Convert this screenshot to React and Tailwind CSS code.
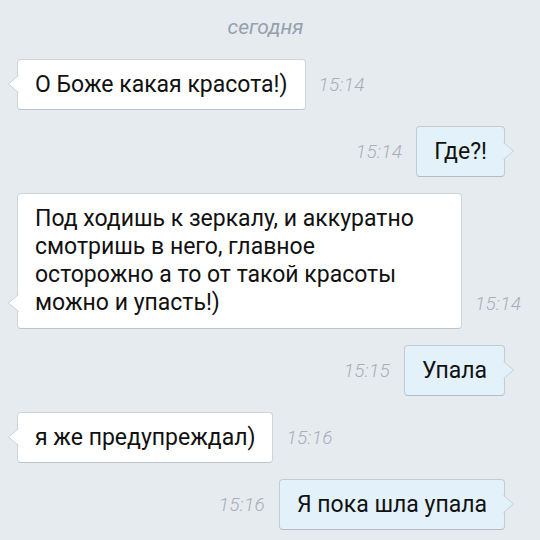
import React from "react";

const font = { fontFamily: "Roboto, 'Noto Sans', sans-serif" };

const Tail = ({ side, fill }) =>
  side === "left" ? (
    <svg className="absolute left-[-11px] bottom-[16px]" width="12" height="18" viewBox="0 0 12 18">
      <path d="M12 0 L11.5 0 L1.5 9 L11.5 18 L12 18 Z" fill={fill} />
      <path d="M11.5 0.5 L1.5 9 L11.5 17.5" fill="none" stroke="#c7cfd8" strokeWidth="1" />
    </svg>
  ) : (
    <svg className="absolute right-[-11px] bottom-[16px]" width="12" height="18" viewBox="0 0 12 18">
      <path d="M0 0 L0.5 0 L10.5 9 L0.5 18 L0 18 Z" fill={fill} />
      <path d="M0.5 0.5 L10.5 9 L0.5 17.5" fill="none" stroke="#c7cfd8" strokeWidth="1" />
    </svg>
  );

const Time = ({ children }) => (
  <span className="mb-[14px] text-[19px] leading-[22px] italic font-light text-[#a6aeb9] tracking-[0.3px]">
    {children}
  </span>
);

const Incoming = ({ text, time, wide }) => (
  <div className="flex items-end gap-[13px] pl-[17px]">
    <div
      className={
        wide
          ? "relative w-[445px] bg-white border border-[#cdd4dc] border-b-[#bcc4cd] rounded-[4px] px-[17px] py-[11px] text-[23px] leading-[28px] text-[#111]"
          : "relative bg-white border border-[#cdd4dc] border-b-[#bcc4cd] rounded-[4px] px-[17px] py-[10px] text-[23px] leading-[29px] text-[#111]"
      }
    >
      {text}
      <Tail side="left" fill="#ffffff" />
    </div>
    <Time>{time}</Time>
  </div>
);

const Outgoing = ({ text, time }) => (
  <div className="flex items-end justify-end gap-[14px] pr-[35px]">
    <Time>{time}</Time>
    <div className="relative bg-[#e3f1fa] border border-[#c3ccd5] border-b-[#b3bcc6] rounded-[4px] px-[17px] py-[10px] text-[23px] leading-[29px] text-[#111]">
      {text}
      <Tail side="right" fill="#e3f1fa" />
    </div>
  </div>
);

export default function App() {
  return (
    <div style={font} className="w-[540px] h-[540px] overflow-hidden bg-[#e6ebf0] pt-[14px]">
      <div className="text-center text-[21px] leading-[26px] italic text-[#95a0ad] pr-[9px]">сегодня</div>
      <div className="flex flex-col gap-4 mt-[19px]">
        <Incoming text="О Боже какая красота!)" time="15:14" />
        <Outgoing text="Где?!" time="15:14" />
        <Incoming
          wide
          text={
            <>
              Под ходишь к зеркалу, и аккуратно
              <br />
              смотришь в него, главное
              <br />
              осторожно а то от такой красоты
              <br />
              можно и упасть!)
            </>
          }
          time="15:14"
        />
        <Outgoing text="Упала" time="15:15" />
        <Incoming text="я же предупреждал)" time="15:16" />
        <Outgoing text="Я пока шла упала" time="15:16" />
      </div>
    </div>
  );
}
